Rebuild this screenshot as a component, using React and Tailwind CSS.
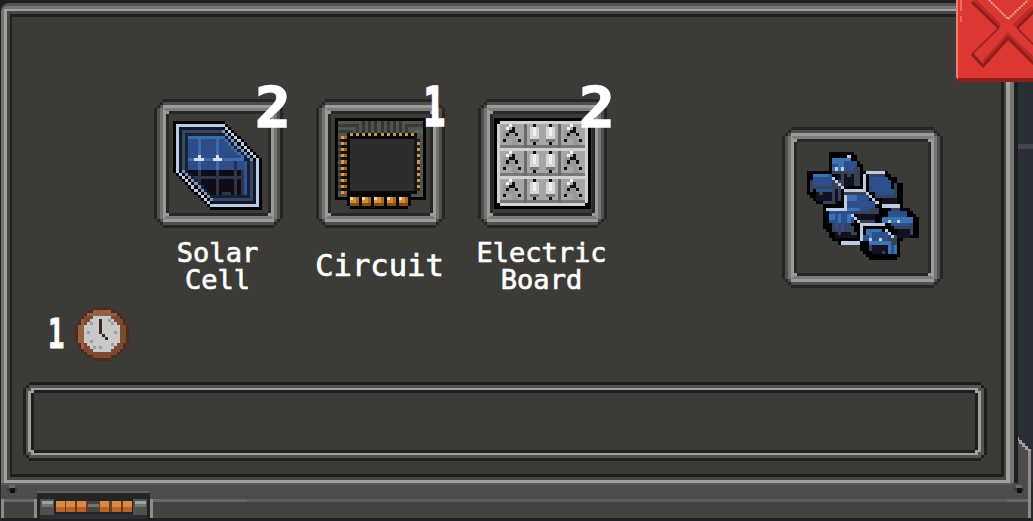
import clsx from 'clsx'

const range = (n) => Array.from({ length: n }, (_, i) => i)

// a sprite is a list of [x, y, w, h, color] painted in order
const Sprite = ({ cols, rows, pixels, className }) => (
  <svg
    viewBox={`0 0 ${cols} ${rows}`}
    preserveAspectRatio="none"
    shapeRendering="crispEdges"
    className={clsx('block shrink-0', className)}
  >
    {pixels.map(([x, y, w, h, color], i) => (
      <rect key={i} x={x} y={y} width={w} height={h} fill={color} />
    ))}
  </svg>
)

const buildSolarCell = () => {
  const rings = { '-1': '#000000', 0: '#bccbdf', 1: '#0e1a2c', 2: '#3c4560', 3: '#14223a' }
  const inset = (x, y) => Math.min(x - 1, 27 - x, y - 1, 27 - y, 15 - x + y, 15 - y + x)
  const scene = (x, y) => {
    if (y === 12 && [7, 8, 9, 13, 14, 15].includes(x)) return '#d5dceb'
    if (y === 11 && [8, 14].includes(x)) return '#d5dceb'
    if (x > 22) return x === 23 && y > 12 ? '#2f5590' : '#131a30'
    if (y < 16) {
      if (y === 5 || y === 12 || x === 8 || x === 14) return '#3a6eab'
      if (x === 20 && y > 11) return '#24304f'
      return x - y > 10 ? '#3a6eab' : '#2e4c88'
    }
    if (y === 18 || x === 8 || x === 14 || x === 20 || x === 22) return '#2f3448'
    if (y === 23 && x > 15 && x < 19) return '#2f3448'
    return '#0d0c18'
  }
  const out = []
  range(29).forEach((y) =>
    range(29).forEach((x) => {
      const d = inset(x, y)
      if (d < -1) return
      const slanted = Math.min(15 - x + y, 15 - y + x) === d
      if (slanted && d === 1) out.push([x, y, 1, 1, '#05080f'])
      else if (slanted && d === 2) out.push([x, y, 1, 1, '#7f93b5'])
      else out.push([x, y, 1, 1, rings[d] ?? scene(x, y)])
    })
  )
  return out
}

const buildCircuit = () => [
  [0, 0, 30, 27, '#050505'],
  [1, 1, 28, 25, '#50534e'],
  // traces
  [1, 2, 7, 1, '#383a36'],
  [7, 2, 1, 3, '#383a36'],
  [1, 4, 5, 1, '#383a36'],
  [24, 2, 5, 1, '#383a36'],
  [23, 2, 1, 3, '#383a36'],
  ...range(7).map((i) => [9 + i * 2, 1, 1, 4, '#343632']),
  ...range(9).map((i) => [1, 7 + i * 2, 1, 1, '#34362f']),
  [26, 4, 3, 1, '#5e615b'],
  // chip
  [4, 5, 23, 20, '#080808'],
  [5, 7, 21, 17, '#2d2d2d'],
  [26, 6, 1, 18, '#151515'],
  ...range(11).map((i) => [5 + i * 2, 5, 1, 1, '#c39a45']),
  [2, 6, 2, 19, '#1b1006'],
  ...range(10).flatMap((i) => [
    [2, 6 + i * 2, 1, 1, '#d99b4c'],
    [3, 6 + i * 2, 1, 1, '#a4631c'],
  ]),
  [27, 7, 1, 17, '#22221c'],
  ...range(8).map((i) => [27, 8 + i * 2, 1, 1, '#c39a45']),
  // contacts
  [4, 25, 21, 4, '#050505'],
  [5, 29, 19, 1, '#050505'],
  ...range(5).flatMap((i) => [
    [5 + i * 4, 26, 3, 3, '#ad681c'],
    [5 + i * 4, 26, 2, 2, '#d08e3c'],
    [5 + i * 4, 26, 1, 1, '#f1d9a0'],
    [5 + i * 4, 28, 3, 1, '#8a4c13'],
  ]),
]

const buildBoard = () => {
  const out = [
    [0, 0, 32, 30, '#000000'],
    [1, 2, 30, 26, '#d2d2d2'],
    [2, 1, 28, 28, '#d2d2d2'],
  ]
  ;[2, 11, 20].forEach((y) => {
    out.push([2, y, 28, 8, '#a6a6a6'], [2, y + 7, 28, 1, '#777777'])
    out.push([10, y, 1, 8, '#6a6a6a'], [21, y, 1, 8, '#6a6a6a'])
    ;[0, 20].forEach((dx) => {
      out.push([dx + 3, y + 2, 4, 3, '#989898'], [dx + 6, y + 5, 2, 2, '#989898'])
      out.push([dx + 5, y, 1, 1, '#f4f4f4'], [dx + 4, y + 1, 1, 1, '#f4f4f4'])
      ;[[6, 1], [5, 2], [6, 2], [4, 3], [7, 3], [3, 5], [8, 5]].forEach(([x, r]) =>
        out.push([dx + x, y + r, 1, 1, '#101010'])
      )
    })
    ;[12, 17].forEach((x) => {
      out.push([x, y + 1, 3, 4, '#d6d6d6'], [x + 1, y + 1, 1, 3, '#f0f0f0'])
      out.push([x, y + 5, 3, 1, '#7a7a7a'])
      out.push([x + 1, y, 1, 1, '#101010'], [x + 1, y + 6, 1, 1, '#101010'])
    })
  })
  return out
}

const buildArray = () => {
  const k = '#020203'
  const b = '#2c4f8d'
  const B = '#3a72b3'
  const n = '#12111f'
  const s = '#39415a'
  const w = '#bccbdf'
  const hull = [
    [7, 14], [7, 15], [7, 15], [7, 16], [7, 17], [7, 17], [0, 25], [0, 26], [0, 28], [0, 28],
    [0, 30], [0, 30], [0, 30], [0, 30], [1, 30], [2, 30], [3, 30], [5, 30], [5, 32], [5, 33],
    [5, 34], [5, 35], [5, 35], [5, 35], [5, 35], [6, 35], [7, 35], [7, 35], [8, 30], [10, 29],
    [17, 29], [17, 29], [18, 29], [19, 29], [20, 28],
  ]
  return [
    ...hull.map(([a, z], y) => [a, y, z - a + 1, 1, k]),
    // top cell
    [8, 2, 6, 4, B], [12, 3, 4, 3, b], [8, 4, 2, 1, b], [8, 6, 8, 1, s], [10, 7, 7, 4, n],
    [15, 5, 2, 6, s], [11, 6, 1, 5, s], [13, 6, 1, 2, s], [9, 5, 1, 1, w], [11, 5, 1, 1, w], [13, 1, 1, 1, w],
    // left cell
    [2, 7, 6, 4, b], [2, 7, 5, 1, B], [1, 9, 1, 4, s], [2, 11, 6, 1, s], [3, 12, 5, 1, b],
    [3, 13, 5, 3, n], [5, 16, 5, 1, s], [8, 9, 3, 7, s], [9, 12, 1, 5, n], [4, 13, 1, 1, s],
    // right cell
    [20, 8, 6, 5, b], [24, 9, 3, 4, b], [20, 7, 5, 1, s], [21, 12, 7, 1, b], [22, 13, 6, 1, b],
    [22, 14, 6, 1, s], [28, 10, 1, 6, s], [24, 15, 5, 2, n], [20, 11, 1, 1, s],
    // middle cell
    [13, 14, 7, 5, b], [13, 14, 3, 2, B], [18, 16, 4, 3, b], [12, 13, 8, 1, s], [13, 18, 4, 1, B],
    [15, 19, 6, 1, s], [16, 20, 6, 2, n], [17, 22, 5, 1, s], [20, 18, 3, 2, s],
    // lower left cell
    [7, 19, 8, 4, b], [7, 20, 2, 2, B], [10, 20, 1, 4, B], [13, 20, 1, 4, B], [8, 23, 6, 3, s],
    [9, 22, 1, 3, b], [11, 23, 1, 3, b], [13, 24, 2, 2, s], [9, 26, 7, 2, n], [10, 26, 1, 1, s], [14, 26, 2, 1, s],
    // lower right cell
    [26, 19, 6, 4, b], [25, 21, 9, 2, B], [24, 21, 1, 2, B], [27, 18, 3, 1, s], [27, 23, 6, 1, b], [28, 24, 6, 1, s],
    [29, 25, 4, 3, n], [33, 23, 1, 4, s], [26, 22, 1, 1, w], [29, 22, 1, 1, w],
    // bottom cell
    [19, 25, 5, 4, B], [21, 26, 6, 3, b], [18, 27, 2, 2, b], [26, 27, 3, 3, s], [20, 29, 7, 1, B],
    [21, 30, 5, 3, n], [26, 30, 3, 3, B], [20, 30, 1, 2, s], [27, 30, 1, 3, b], [24, 32, 1, 1, s],
    [20, 28, 1, 1, w], [23, 28, 1, 1, w],
    // frame seams
    [19, 6, 6, 1, w], [18, 7, 1, 5, w], [12, 12, 7, 1, w],
    [8, 8, 1, 1, w], [9, 9, 1, 1, w], [10, 10, 1, 1, w], [11, 11, 1, 1, w],
    [19, 13, 1, 1, w], [20, 14, 1, 1, w], [21, 15, 1, 1, w], [22, 16, 1, 1, w],
    [24, 17, 6, 1, w], [12, 14, 1, 4, w], [6, 18, 7, 1, w],
    [14, 20, 1, 1, w], [15, 21, 1, 1, w], [16, 22, 1, 1, w],
    [17, 23, 8, 1, w], [17, 24, 1, 5, w], [11, 29, 6, 1, w],
    [25, 25, 1, 1, w], [26, 26, 1, 1, w], [27, 27, 1, 1, w],
  ]
}

const buildClock = () => {
  const out = []
  range(18).forEach((y) =>
    range(18).forEach((x) => {
      const r = Math.hypot(x - 8.5, y - 8.5)
      if (r > 9) return
      let color = '#c9c9c9'
      if (r > 8) color = '#4b2c1d'
      else if (r > 6.1) color = x < 3 || y < 3 ? '#97603f' : '#7d4a30'
      out.push([x, y, 1, 1, color])
    })
  )
  const ticks = [[4, 8], [13, 8], [8, 13], [5, 5], [12, 5], [5, 11], [12, 12], [11, 4], [6, 13]]
  ticks.forEach(([x, y]) => out.push([x, y, 1, 1, '#9b9fa2']))
  out.push([8, 4, 1, 5, '#382820'], [9, 9, 1, 1, '#382820'], [10, 10, 1, 1, '#382820'])
  return out
}

// stepped pixel corners
const corner3 =
  '[clip-path:polygon(0_3px,3px_3px,3px_0,calc(100%-3px)_0,calc(100%-3px)_3px,100%_3px,100%_calc(100%-3px),calc(100%-3px)_calc(100%-3px),calc(100%-3px)_100%,3px_100%,3px_calc(100%-3px),0_calc(100%-3px))]'
const corner6 =
  '[clip-path:polygon(0_6px,3px_6px,3px_3px,6px_3px,6px_0,calc(100%-6px)_0,calc(100%-6px)_3px,calc(100%-3px)_3px,calc(100%-3px)_6px,100%_6px,100%_calc(100%-6px),calc(100%-3px)_calc(100%-6px),calc(100%-3px)_calc(100%-3px),calc(100%-6px)_calc(100%-3px),calc(100%-6px)_100%,6px_100%,6px_calc(100%-3px),3px_calc(100%-3px),3px_calc(100%-6px),0_calc(100%-6px))]'
const corner9 =
  '[clip-path:polygon(0_9px,3px_9px,3px_6px,6px_6px,6px_3px,9px_3px,9px_0,calc(100%-9px)_0,calc(100%-9px)_3px,calc(100%-6px)_3px,calc(100%-6px)_6px,calc(100%-3px)_6px,calc(100%-3px)_9px,100%_9px,100%_calc(100%-9px),calc(100%-3px)_calc(100%-9px),calc(100%-3px)_calc(100%-6px),calc(100%-6px)_calc(100%-6px),calc(100%-6px)_calc(100%-3px),calc(100%-9px)_calc(100%-3px),calc(100%-9px)_100%,9px_100%,9px_calc(100%-3px),6px_calc(100%-3px),6px_calc(100%-6px),3px_calc(100%-6px),3px_calc(100%-9px),0_calc(100%-9px))]'

const Slot = ({ className, children }) => (
  <div className={clsx('bg-[#252524] p-[3px]', corner9, className)}>
    <div className={clsx('h-full bg-[#4f4f4e] p-[3px]', corner6)}>
      <div className={clsx('h-full border-[3px] border-x-[#757574] border-y-[#9b9b9a]', corner3)}>
        <div className="h-full border-[3px] border-x-[#9b9b9a] border-y-[#7c7c7b] bg-[#9b9b9a]">
          <div
            className={clsx(
              'flex h-full items-center justify-center border-[3px] border-[#272726] bg-[#3c3b37]',
              corner3
            )}
          >
            {children}
          </div>
        </div>
      </div>
    </div>
  </div>
)

const ingredients = [
  {
    name: 'Solar\nCell',
    count: 2,
    icon: <Sprite cols={29} rows={29} pixels={buildSolarCell()} className="mt-1 mr-[2px] size-[89px]" />,
  },
  {
    name: 'Circuit',
    count: 1,
    icon: <Sprite cols={30} rows={30} pixels={buildCircuit()} className="size-[91px]" />,
  },
  {
    name: 'Electric\nBoard',
    count: 2,
    icon: <Sprite cols={32} rows={30} pixels={buildBoard()} className="h-[91px] w-[97px]" />,
  },
]

const Ingredient = ({ name, count, icon }) => (
  <div className="relative flex w-[129px] flex-col items-center">
    <Slot className="h-[129px] w-[129px]">{icon}</Slot>
    <span
      className={clsx(
        'absolute -top-[14px] origin-left text-[55px] leading-[44px] font-bold [-webkit-text-stroke:1.5px_white]',
        count === 1 ? 'left-[107px] scale-x-[0.68]' : 'left-[101px] scale-x-[1.08]'
      )}
    >
      {count}
    </span>
    <div
      className={clsx(
        'mt-[11px] mr-[2px] flex h-[54px] items-center text-center whitespace-pre [-webkit-text-stroke:0.7px_white]',
        name.includes('\n') ? 'text-[27px] leading-[27px]' : 'text-[30.5px] leading-[30px]'
      )}
    >
      {name}
    </div>
  </div>
)

const CloseButton = () => (
  <button className="absolute top-0 right-0 h-[82px] w-[77px] overflow-hidden rounded-bl-md border-b-4 border-l-2 border-b-[#8f1f1b] border-l-[#f07f78] bg-[#dc3833]">
    <svg viewBox="958 0 75 78" className="block h-[78px] w-[75px]" fill="none">
      <path d="M974 0 1000 26M984 62 1008 35 1035 61M1014 26 1033 8" stroke="#b92b27" strokeWidth="4" />
      <path d="M972 2 999 28M972 54 983 66 1008 38 1035 65M1017 28 1035 10" stroke="#8f1f1b" strokeWidth="3" />
      <path d="M999 28 972 54M1017 28 1035 46" stroke="#8f1f1b" strokeWidth="1.5" />
      <path d="M989 0 1008 19 1028 0" stroke="#f3a09a" strokeWidth="2" strokeDasharray="2 1" />
      <path d="M961 0V11M961 16V22" stroke="#f07f78" strokeWidth="1.5" />
    </svg>
  </button>
)

const Chassis = () => (
  <svg viewBox="0 0 1033 38" shapeRendering="crispEdges" className="block h-[38px] w-full">
    <rect width="1033" height="38" fill="#4c4c4b" />
    <rect y="0" width="1012" height="2" fill="#5c5c5b" />
    <rect y="16" width="1033" height="3" fill="#666665" />
    <rect y="19" width="1033" height="16" fill="#434342" />
    <rect x="247" y="16" width="760" height="3" fill="#5b5b5a" />
    <rect y="35" width="1033" height="3" fill="#211f26" />
    <rect width="1" height="38" fill="#262626" />
    <rect x="1" y="16" width="3" height="19" fill="#8c8c8b" />
    <rect x="34" y="16" width="3" height="19" fill="#8c8c8b" />
    <rect x="150" y="16" width="3" height="19" fill="#8c8c8b" />
    <rect x="37" y="8" width="113" height="2" fill="#5f5f5e" />
    <rect x="37" y="10" width="113" height="25" fill="#242423" />
    <rect x="40" y="31" width="106" height="5" fill="#2c2e35" />
    {[40, 133].map((x) => (
      <g key={x}>
        <rect x={x} y="16" width="14" height="16" fill="#50504f" />
        <rect x={x + 2} y="18" width="11" height="3" fill="#a0a09f" />
        <rect x={x + 2} y="21" width="11" height="3" fill="#757574" />
      </g>
    ))}
    <rect x="56" y="18" width="75" height="11" fill="#6b3c1e" />
    {[56, 66, 77, 100, 112, 123].map((x) => (
      <g key={x}>
        <rect x={x} y="18" width="9" height="11" fill="#b5642b" />
        <rect x={x} y="18" width="9" height="6" fill="#dc8943" />
      </g>
    ))}
    <rect x="88" y="18" width="11" height="11" fill="#444443" />
    <rect x="88" y="21" width="11" height="3" fill="#747473" />
    {[12, 1019].map((x) => (
      <g key={x}>
        <rect x={x - 3} y="2" width="6" height="3" fill="#6b6b6a" />
        <rect x={x - 5} y="5" width="10" height="3" fill="#393938" />
        <rect x={x - 2} y="5" width="5" height="5" fill="#111111" />
      </g>
    ))}
    <rect x="1028" width="3" height="35" fill="#8c8c8b" />
    <rect x="1031" width="2" height="38" fill="#262629" />
  </svg>
)

const SidePanel = () => (
  <div className="flex w-4 flex-col border-l border-[#1c1c1d] bg-[#2a2f35] pt-36">
    <div className="h-[5px] bg-[#44454f]" />
    <svg viewBox="0 0 15 54" shapeRendering="crispEdges" className="mt-auto block h-[54px] w-[15px]">
      <path d="M0 8 13 22V54H0Z" fill="#4c4c4b" />
      {range(5).map((i) => (
        <rect key={i} x={-2 + i * 3} y={8 + i * 3} width="3" height="4" fill="#a0a09f" />
      ))}
      <rect x="10" y="22" width="3" height="32" fill="#8c8c8b" />
    </svg>
  </div>
)

const App = () => (
  <div className="relative flex h-[521px] w-[1033px] flex-col overflow-hidden bg-[#1f1f1e] font-['DejaVu_Sans_Mono',monospace] text-white">
    <div className="flex h-[483px]">
      <div className="w-[1017px] rounded-tl-xl border-t-[3px] border-r-[3px] border-l border-[#1f1f1e] bg-[#1f1f1e]">
        <div className="h-full rounded-tl-lg border-t-[3px] border-[#525251]">
          <div className="h-full rounded-tl-md border-t-[3px] border-r-4 border-l-[3px] border-[#757574]">
            <div className="h-full border-t-2 border-r-4 border-b-[3px] border-l-[3px] border-[#a0a09f]">
              <div className="h-full border-t-[3px] border-r-2 border-b-[3px] border-l-[3px] border-[#474746]">
                <div className="flex h-full flex-col border-t-[3px] border-r-[3px] border-b-[3px] border-l-2 border-[#1f1f1e] bg-[#3c3b37]">
                  <div className="flex items-start pt-[82px] pl-[142px]">
                    <div className="flex gap-[33px]">
                      {ingredients.map((item) => (
                        <Ingredient key={item.name} {...item} />
                      ))}
                    </div>
                    <Slot className="mt-7 ml-[175px] h-[161px] w-[161px]">
                      <Sprite cols={36} rows={35} pixels={buildArray()} className="mb-1 h-[108px] w-[112px]" />
                    </Slot>
                  </div>
                  <div className="mt-[14px] ml-[36px] flex h-[54px] items-center">
                    <span className="w-[27px] origin-left scale-x-[0.68] text-[40px] leading-none font-bold [-webkit-text-stroke:1px_white]">
                      1
                    </span>
                    <Sprite cols={18} rows={18} pixels={buildClock()} className="size-[54px]" />
                  </div>
                  <div className={clsx('mt-[21px] ml-[11px] h-[79px] w-[964px] bg-[#1f1f1e] p-[3px]', corner6)}>
                    <div className={clsx('h-full border-2 border-t-[3px] border-r-[3px] border-b-[3px] border-[#525251] bg-[#525251]', corner3)}>
                      <div className={clsx('h-full border-[3px] border-y-2 border-[#a0a09f] bg-[#a0a09f]', corner3)}>
                        <div className={clsx('h-full border-[3px] border-[#1f1f1e] bg-[#3c3b37]', corner3)} />
                      </div>
                    </div>
                  </div>
                </div>
              </div>
            </div>
          </div>
        </div>
      </div>
      <SidePanel />
    </div>
    <Chassis />
    <CloseButton />
  </div>
)

export default App
